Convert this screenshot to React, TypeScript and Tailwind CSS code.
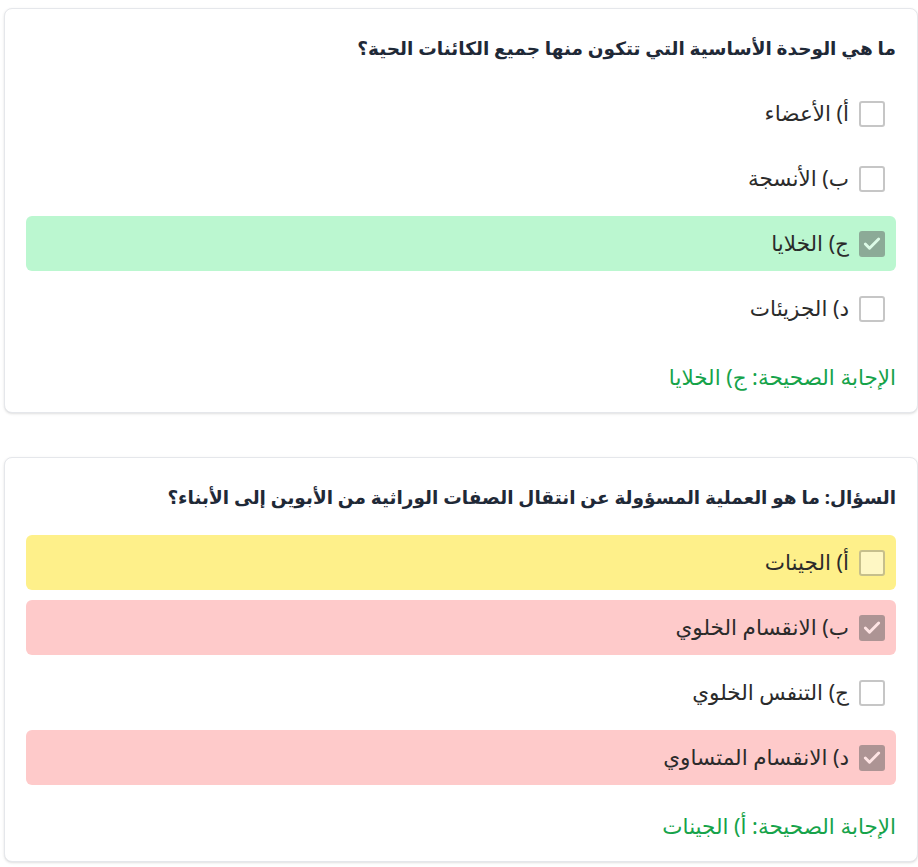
import { Check } from 'lucide-react'

type Option = {
  label: string
  checked: boolean
  tone: 'none' | 'green' | 'yellow' | 'red'
}

type Question = {
  title: string
  options: Option[]
  answer: string
}

const QUESTIONS: Question[] = [
  {
    title: 'ما هي الوحدة الأساسية التي تتكون منها جميع الكائنات الحية؟',
    options: [
      { label: 'أ) الأعضاء', checked: false, tone: 'none' },
      { label: 'ب) الأنسجة', checked: false, tone: 'none' },
      { label: 'ج) الخلايا', checked: true, tone: 'green' },
      { label: 'د) الجزيئات', checked: false, tone: 'none' },
    ],
    answer: 'الإجابة الصحيحة: ج) الخلايا',
  },
  {
    title: 'السؤال: ما هو العملية المسؤولة عن انتقال الصفات الوراثية من الأبوين إلى الأبناء؟',
    options: [
      { label: 'أ) الجينات', checked: false, tone: 'yellow' },
      { label: 'ب) الانقسام الخلوي', checked: true, tone: 'red' },
      { label: 'ج) التنفس الخلوي', checked: false, tone: 'none' },
      { label: 'د) الانقسام المتساوي', checked: true, tone: 'red' },
    ],
    answer: 'الإجابة الصحيحة: أ) الجينات',
  },
]

const TONES = {
  none: 'bg-white',
  green: 'bg-[#bbf7d0]',
  yellow: 'bg-[#fef08a]',
  red: 'bg-[#fecaca]',
}

function Box({ checked }: { checked: boolean }) {
  return (
    <div
      className={`h-[26px] w-[26px] shrink-0 rounded-[3px] flex items-center justify-center opacity-50 ${
        checked ? 'bg-[#5f5f5f]' : 'bg-white border-2 border-[#8f8f8f]'
      }`}
    >
      {checked && <Check className="h-[20px] w-[20px] text-white" strokeWidth={3.5} />}
    </div>
  )
}

export default function App() {
  return (
    <div
      dir="rtl"
      className="bg-white min-h-screen pt-2 pl-1"
      style={{ fontFamily: '"Noto Sans", "DejaVu Sans", sans-serif' }}
    >
      {QUESTIONS.map((q, i) => (
        <div
          key={i}
          className="mb-11 rounded-lg border border-[#e5e7eb] bg-white px-[21px] pt-[24px] pb-[21px] shadow-sm"
        >
          <h2 className="text-[18.5px] leading-[30px] font-bold text-[#1f2937] mb-[23px]">
            {q.title}
          </h2>
          <div className="flex flex-col gap-[10px]">
            {q.options.map((o, j) => (
              <div
                key={j}
                className={`h-[55px] rounded-md px-[11px] flex items-center gap-[10px] ${TONES[o.tone]}`}
              >
                <Box checked={o.checked} />
                <span className="text-[21.5px] text-[#2b2b2b]">{o.label}</span>
              </div>
            ))}
          </div>
          <p className="mt-[27px] text-[21.5px] leading-[28px] text-[#16a34a]">{q.answer}</p>
        </div>
      ))}
    </div>
  )
}
